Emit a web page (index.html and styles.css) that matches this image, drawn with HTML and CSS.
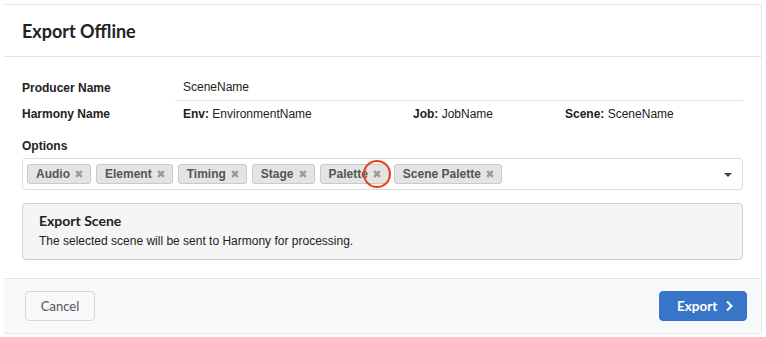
FILE: index.html
```html
<!DOCTYPE html>
<html lang="en">
<head>
  <meta charset="UTF-8" />
  <title>Export Offline</title>
  <link rel="stylesheet" href="styles.css">
</head>
<body>

  <div class="modal">
    <div class="modal-header">
      <h2>Export Offline</h2>
    </div>

    <div class="modal-body">
      <div class="info-row">
        <div class="info-label">Producer Name</div>
        <div class="info-value line">SceneName</div>
      </div>
      <div class="info-row">
        <div class="info-label">Harmony Name</div>
        <div class="info-value cols">
          <span><b>Env:</b> EnvironmentName</span>
          <span><b>Job:</b> JobName</span>
          <span><b>Scene:</b> SceneName</span>
        </div>
      </div>

      <div class="field-label">Options</div>
      <div class="select">
        <div class="chips">
          <span class="chip">Audio <i class="chip-x"><svg viewBox="0 0 8 8"><path d="M1.2 1.2L6.8 6.8M6.8 1.2L1.2 6.8"/></svg></i></span>
          <span class="chip">Element <i class="chip-x"><svg viewBox="0 0 8 8"><path d="M1.2 1.2L6.8 6.8M6.8 1.2L1.2 6.8"/></svg></i></span>
          <span class="chip">Timing <i class="chip-x"><svg viewBox="0 0 8 8"><path d="M1.2 1.2L6.8 6.8M6.8 1.2L1.2 6.8"/></svg></i></span>
          <span class="chip">Stage <i class="chip-x"><svg viewBox="0 0 8 8"><path d="M1.2 1.2L6.8 6.8M6.8 1.2L1.2 6.8"/></svg></i></span>
          <span class="chip">Palette <i class="chip-x marked"><svg viewBox="0 0 8 8"><path d="M1.2 1.2L6.8 6.8M6.8 1.2L1.2 6.8"/></svg></i></span>
          <span class="chip">Scene Palette <i class="chip-x"><svg viewBox="0 0 8 8"><path d="M1.2 1.2L6.8 6.8M6.8 1.2L1.2 6.8"/></svg></i></span>
        </div>
        <span class="caret"></span>
      </div>

      <div class="notice">
        <h3>Export Scene</h3>
        <p>The selected scene will be sent to Harmony for processing.</p>
      </div>
    </div>

    <div class="modal-footer">
      <button class="btn">Cancel</button>
      <button class="btn btn-primary">Export <svg class="chev" viewBox="0 0 8 12"><path d="M2 1.5L6.5 6L2 10.5"/></svg></button>
    </div>
  </div>

</body>
</html>
```

FILE: styles.css
```css
body {
  margin: 0;
  padding: 4px;
  background: #fff;
  font-family: 'Liberation Sans', Arial, sans-serif;
  color: #222;
}
.modal {
  background: #fff;
  border: 1px solid #e8e8e8;
  border-left: 0;
  border-radius: 0 4px 4px 0;
  overflow: hidden;
}
.modal-header {
  padding: 15px 18px 14px;
  border-bottom: 1px solid #e2e2e2;
}
.modal-header h2 {
  margin: 0;
  font-family: Lato, sans-serif;
  font-weight: 700;
  font-size: 18px;
  line-height: 22px;
  color: #222;
}
.modal-body {
  padding: 18px 18px 18px;
}
.info-row {
  display: flex;
  height: 26px;
  font-size: 12px;
}
.info-label {
  width: 153px;
  font-weight: 700;
  line-height: 26px;
}
.info-value {
  flex: 1;
  padding-left: 8px;
  line-height: 26px;
}
.info-value.line {
  border-bottom: 1px solid #e4e4e4;
  line-height: 25px;
}
.info-value.cols {
  display: grid;
  grid-template-columns: 230px 152px 1fr;
}
.field-label {
  margin-top: 12px;
  font-size: 12px;
  font-weight: 700;
  line-height: 14px;
}
.select {
  margin-top: 5px;
  display: flex;
  align-items: center;
  border: 1px solid #dcdcdc;
  border-radius: 4px;
  padding: 5px 10px 5px 4px;
}
.chips {
  flex: 1;
  display: flex;
  gap: 5px;
}
.chip {
  display: inline-flex;
  align-items: center;
  gap: 5px;
  height: 18px;
  padding: 0 8px 0 8px;
  background: #e4e4e4;
  border: 1px solid #cacaca;
  border-radius: 3px;
  font-size: 12px;
  font-weight: 700;
  color: #555;
}
.chip-x {
  position: relative;
  display: inline-flex;
  width: 8px;
  height: 8px;
  margin-right: -1px;
}
.chip-x svg {
  width: 8px;
  height: 8px;
  stroke: #9a9a9a;
  stroke-width: 2.4;
  fill: none;
}
.chip-x.marked::after {
  content: "";
  position: absolute;
  left: -10px;
  top: -10px;
  width: 24px;
  height: 24px;
  border: 2px solid #e5431d;
  border-radius: 50%;
}
.caret {
  width: 0;
  height: 0;
  border-left: 4px solid transparent;
  border-right: 4px solid transparent;
  border-top: 4px solid #444;
  margin-top: 2px;
}
.notice {
  margin-top: 13px;
  background: #f5f5f5;
  border: 1px solid #cfcfcf;
  border-radius: 4px;
  padding: 8px 16px 10px;
}
.notice h3 {
  margin: 0;
  font-family: Lato, sans-serif;
  font-weight: 700;
  font-size: 14px;
  line-height: 18px;
  color: #222;
}
.notice p {
  margin: 3px 0 0;
  font-size: 12px;
  line-height: 16px;
  color: #222;
}
.modal-footer {
  display: flex;
  justify-content: space-between;
  padding: 12px 14px 12px 21px;
  background: #f7f8fa;
  border-top: 1px solid #e6e6e6;
}
.btn {
  height: 30px;
  width: 70px;
  padding: 0;
  border: 1px solid #d6d6d6;
  border-radius: 4px;
  background: #f7f8fa;
  font-family: Lato, sans-serif;
  font-size: 13px;
  color: #555;
}
.btn-primary {
  display: inline-flex;
  align-items: center;
  gap: 8px;
  width: 88px;
  padding: 0 0 0 17px;
  background: #3775c9;
  border-color: #3775c9;
  color: #fff;
  font-size: 13.5px;
  font-weight: 700;
}
.chev {
  flex: none;
  width: 8px;
  height: 12px;
  stroke: #fff;
  stroke-width: 2;
  fill: none;
}
```
